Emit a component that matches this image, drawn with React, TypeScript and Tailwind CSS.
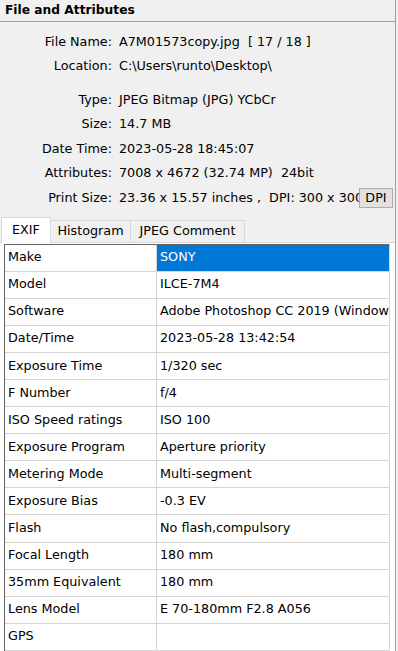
import React from "react";

const info1 = [
  ["File Name:", "A7M01573copy.jpg  [ 17 / 18 ]"],
  ["Location:", "C:\\Users\\runto\\Desktop\\"],
];
const info2 = [
  ["Type:", "JPEG Bitmap (JPG) YCbCr"],
  ["Size:", "14.7 MB"],
  ["Date Time:", "2023-05-28 18:45:07"],
  ["Attributes:", "7008 x 4672 (32.74 MP)  24bit"],
];

const rows = [
  ["Make", "SONY"],
  ["Model", "ILCE-7M4"],
  ["Software", "Adobe Photoshop CC 2019 (Windows)"],
  ["Date/Time", "2023-05-28 13:42:54"],
  ["Exposure Time", "1/320 sec"],
  ["F Number", "f/4"],
  ["ISO Speed ratings", "ISO 100"],
  ["Exposure Program", "Aperture priority"],
  ["Metering Mode", "Multi-segment"],
  ["Exposure Bias", "-0.3 EV"],
  ["Flash", "No flash,compulsory"],
  ["Focal Length", "180 mm"],
  ["35mm Equivalent", "180 mm"],
  ["Lens Model", "E 70-180mm F2.8 A056"],
  ["GPS", ""],
];

function InfoRow({ label, value }: { label: string; value: string }) {
  return (
    <div className="flex h-[24.5px] items-center whitespace-pre">
      <div className="w-[112px] text-right">{label}</div>
      <div className="ml-[7px]">{value}</div>
    </div>
  );
}

export default function App() {
  return (
    <div
      className="w-[398px] h-[651px] overflow-hidden bg-[#f0f0f0] text-[12.75px] text-black"
      style={{ fontFamily: '"DejaVu Sans", "Liberation Sans", sans-serif' }}
    >
      <div className="w-[396px] h-full border-r border-[#a0a0a0] flex flex-col">
        <div className="h-[22px] shrink-0 border-b border-[#a0a0a0] pl-[5px] flex items-center font-bold text-[12.25px] leading-none">
          File and Attributes
        </div>
        <div className="pt-[8px] leading-none shrink-0">
          {info1.map(([l, v]) => (
            <InfoRow key={l} label={l} value={v} />
          ))}
          <div className="h-[9px]" />
          {info2.map(([l, v]) => (
            <InfoRow key={l} label={l} value={v} />
          ))}
          <div className="flex h-[24.5px] items-center whitespace-pre">
            <div className="w-[112px] text-right">Print Size:</div>
            <div className="ml-[7px] w-[240px] overflow-hidden">
              23.36 x 15.57 inches ,  DPI: 300 x 300
            </div>
            <div className="w-[34px] h-[20px] border border-[#adadad] bg-[#e1e1e1] flex items-center justify-center">
              DPI
            </div>
          </div>
        </div>
        <div className="mt-[6px] shrink-0 flex items-end h-[26px] pl-[1px] leading-none border-b border-[#d9d9d9]">
          <div className="w-[50px] h-[26px] -mb-px bg-white border border-b-0 border-[#d9d9d9] flex items-center justify-center">
            EXIF
          </div>
          <div className="w-[80px] h-[22px] border border-l-0 border-b-0 border-[#d9d9d9] flex items-center justify-center">
            Histogram
          </div>
          <div className="w-[114px] h-[22px] border border-l-0 border-b-0 border-[#d9d9d9] flex items-center justify-center">
            JPEG Comment
          </div>
        </div>
        <div className="flex-1 bg-white pt-[1px] pl-[4px] leading-none">
          <div className="w-[386px] border-l border-t border-[#646464] border-r-[#d5d5d5] border-r">
            {rows.map(([k, v], i) => (
              <div key={k} className="flex h-[27.1px] border-b border-[#d5d5d5]">
                <div className="w-[152px] shrink-0 border-r border-[#d5d5d5] pl-[3px] flex items-center whitespace-nowrap">
                  {k}
                </div>
                <div
                  className={
                    "flex-1 pl-[3px] flex items-center whitespace-nowrap overflow-hidden " +
                    (i === 0 ? "bg-[#0078d7] text-white" : "")
                  }
                >
                  {v}
                </div>
              </div>
            ))}
          </div>
        </div>
      </div>
    </div>
  );
}
